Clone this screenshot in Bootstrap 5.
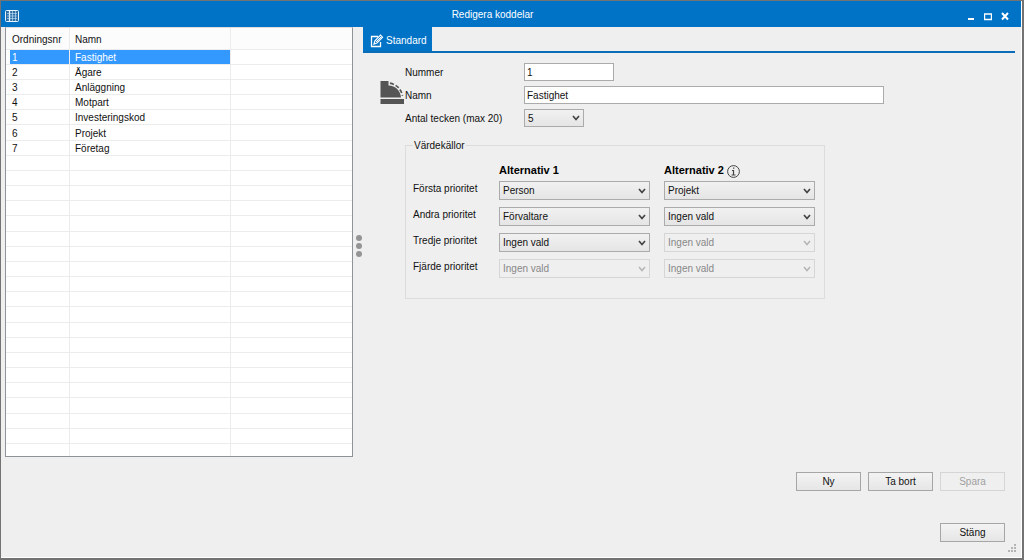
<!DOCTYPE html>
<html lang="sv">
<head>
<meta charset="utf-8">
<meta name="viewport" content="width=device-width, initial-scale=1">
<title>Redigera koddelar</title>
<link href="https://cdn.jsdelivr.net/npm/bootstrap@5.3.0/dist/css/bootstrap.min.css" rel="stylesheet">
<style>
  :root { --accent: #0173c7; --line: #ececec; }
  body { font: 10px/15px "Liberation Sans", Arial, sans-serif; color: #111; background: #efefef; }
  .window { border: 1px solid #737373; border-width: 1px 2px 2px 1px; }
  .window-inner { border: solid #fff; border-width: 0 1px 1px 0; }
  .titlebar { background: var(--accent); height: 26px; color: #fff; }
  .titlebar button { background: none; border: 0; padding: 0; line-height: 0; width: 17px; }
  .list-pane { width: 348px; height: 430px; background: #fff; border: 1px solid #8e9299; border-top-color: #ddd; overflow: hidden; }
  .code-list { width: 100%; table-layout: fixed; border-collapse: separate; border-spacing: 0; }
  .code-list th { height: 22px; font-weight: 400; background: #fcfcfc; }
  .code-list td { height: 15px; line-height: 12px; }
  .code-list tr:nth-child(6n) td { height: 16px; }
  .code-list th, .code-list td { padding: 2px 0 0 5px; border-bottom: 1px solid var(--line); border-right: 1px solid var(--line); white-space: nowrap; }
  .code-list th:last-child, .code-list td:last-child { border-right: 0; }
  .code-list th:first-child, .code-list td:first-child { padding-left: 6px; }
  .code-list .selected td:not(:last-child) { background: #3399ff; color: #fff; }
  .code-list .selected td:first-child { background: linear-gradient(90deg, #fff 4px, #3399ff 4px); }
  .splitter { width: 10px; padding: 208px 0 0 2px; gap: 2px; }
  .splitter i { width: 6px; height: 6px; border-radius: 50%; background: #949494; }
  .tabs { border-bottom: 2px solid #0b6cb8; margin-right: 6px; }
  .tabs .nav-link { background: var(--accent); color: #fff; height: 24px; padding: 3px 5px 0 7px; border-radius: 0; gap: 2px; }
  #standard { padding-top: 10px; }
  .form-icon { margin: 18px 0 0 16px; }
  .fields { display: grid; grid-template-columns: 119px 360px; row-gap: 5px; }
  .fields > * { align-self: center; }
  .form-control, .form-select { font-size: inherit; line-height: 15px; border-radius: 0; color: #111; border: 1px solid #ababab; padding: 0 2px; min-height: 0; }
  .form-select { height: 19px; padding: 0 14px 0 3px; background-color: #eaeaea;
    background-image: url("data:image/svg+xml,%3Csvg xmlns='http://www.w3.org/2000/svg' viewBox='0 0 8 6'%3E%3Cpath d='M1 1l3 3.5L7 1' fill='none' stroke='%23444' stroke-width='1.7'/%3E%3C/svg%3E"), linear-gradient(#f1f1f1, #e5e5e5);
    background-size: 8px 6px, 100% 100%; background-position: right 3px center, 0 0; }
  .fields .form-control, .fields .form-select { height: 18px; }
  .form-select:disabled { background-color: #efefef; color: #888; border-color: #d6d6d6;
    background-image: url("data:image/svg+xml,%3Csvg xmlns='http://www.w3.org/2000/svg' viewBox='0 0 8 6'%3E%3Cpath d='M1 1l3 3.5L7 1' fill='none' stroke='%23b5b5b5' stroke-width='1.5'/%3E%3C/svg%3E"); background-size: 8px 6px; background-position: right 3px center; }
  .sources { width: 420px; margin-top: 11px; }
  .sources fieldset { border: 1px solid #dcdcdc; padding: 0 9px 20px 7px; }
  .sources legend { float: none; font-size: inherit; line-height: 15px; width: auto; margin: 0; padding: 0 1px; }
  .priorities { display: grid; grid-template-columns: 72px 1fr 1fr; column-gap: 14px; row-gap: 7px; margin-top: 10px; white-space: nowrap; }
  .priorities .head { font-weight: 700; font-size: 11px; line-height: 15px; height: 11px; color: #000; }
  .btn-row { gap: 7px; }
  .btn-win { width: 65px; height: 19px; padding: 0; font-size: inherit; line-height: 17px; border: 1px solid #a6a6a6; border-radius: 0; color: #111; background: linear-gradient(#f3f3f3, #e6e6e6); }
  .btn-win:disabled { background: #efefef; color: #a0a0a0; border-color: #d5d5d5; opacity: 1; }
  .commands { padding: 15px 16px 15px 0; }
</style>
</head>
<body>
<div class="window min-vh-100 d-flex">
<div class="window-inner flex-fill d-flex flex-column">
  <header class="titlebar d-flex align-items-center">
    <svg class="ms-1 mt-1" width="14" height="12" viewBox="0 0 14 12"><rect x=".5" y=".5" width="13" height="11" rx="1" fill="#2a6ca3" stroke="#e7f6ff"/><path d="M4.500 1v10" stroke="#e7f6ff" stroke-width="1.300"/><path d="M7.500 1v10M10.500 1v10M2 3.500h10M2 6h10M2 8.500h10" stroke="#b9dcf5" stroke-width=".7"/></svg>
    <div class="flex-fill text-center ps-1">Redigera koddelar</div>
    <div class="d-flex pe-2 pt-1">
      <button type="button" aria-label="Minimera"><svg width="8" height="10"><path d="M1 8h6" stroke="#fff" stroke-width="2"/></svg></button>
      <button type="button" aria-label="Maximera"><svg width="8" height="10"><path d="M.5 3v5.500h7V3M0 3h8" fill="none" stroke="#fff" stroke-width="1.400"/></svg></button>
      <button type="button" aria-label="Stäng fönster"><svg width="8" height="10"><path d="M1 2l6 6.500M7 2L1 8.500" stroke="#fff" stroke-width="2"/></svg></button>
    </div>
  </header>
  <main class="d-flex ms-1">
    <section class="list-pane flex-shrink-0">
      <table class="code-list">
        <colgroup><col style="width:64px"><col style="width:161px"><col></colgroup>
        <thead><tr><th>Ordningsnr</th><th>Namn</th><th></th></tr></thead>
        <tbody id="codes">
          <tr class="selected"><td>1</td><td>Fastighet</td><td></td></tr>
          <tr><td>2</td><td>Ägare</td><td></td></tr>
          <tr><td>3</td><td>Anläggning</td><td></td></tr>
          <tr><td>4</td><td>Motpart</td><td></td></tr>
          <tr><td>5</td><td>Investeringskod</td><td></td></tr>
          <tr><td>6</td><td>Projekt</td><td></td></tr>
          <tr><td>7</td><td>Företag</td><td></td></tr>
        </tbody>
      </table>
    </section>
    <div class="splitter d-flex flex-column align-items-center flex-shrink-0"><i></i><i></i><i></i></div>
    <section class="flex-fill">
      <nav class="tabs nav">
        <a href="#standard" class="nav-link d-flex align-items-center">
          <svg width="14" height="14" viewBox="0 0 14 14" fill="none" stroke="#fff"><path d="M8 2.500H1.500v10h9V8" stroke-width="1.300"/><path d="M4 10l.8-3L10.500 1.200l2 2L7 9z" stroke-width="1.200"/><path d="M6 8l5-5" /></svg>
          Standard</a>
      </nav>
      <form id="standard" class="d-flex">
        <svg class="form-icon flex-shrink-0" width="26" height="24" viewBox="0 0 26 24" fill="#555"><path d="M1.500 0h8v4.500c7 0 12 5 12.500 12h-20.500z"/><path d="M1.500 18h23.500v5h-23.500z"/><path d="M11 2.200c7 1.500 11 6 12.500 12.500" fill="none" stroke="#555" stroke-width="1.700" stroke-dasharray="4 2"/></svg>
        <div>
          <div class="fields">
            <label for="nummer">Nummer</label><input class="form-control w-25" id="nummer" value="1">
            <label for="namn">Namn</label><input class="form-control" id="namn" value="Fastighet">
            <label for="antal">Antal tecken (max 20)</label><select class="form-select" id="antal" style="width:60px"><option>5</option></select>
          </div>
          <div class="sources">
            <fieldset>
              <legend>Värdekällor</legend>
              <div class="priorities">
                <span></span>
                <span class="head">Alternativ 1</span>
                <span class="head">Alternativ 2 <svg width="13" height="13" viewBox="0 0 13 13" fill="none" stroke="#444"><circle cx="6.500" cy="6.500" r="5.900"/><path d="M5 5.500h1.500v4M4.500 10h4M6 3.200h1.300" stroke-width="1.200"/></svg></span>
                <label for="p1">Första prioritet</label><select class="form-select" id="p1"><option>Person</option></select><select class="form-select" aria-label="Första prioritet, alternativ 2"><option>Projekt</option></select>
                <label for="p2">Andra prioritet</label><select class="form-select" id="p2"><option>Förvaltare</option></select><select class="form-select" aria-label="Andra prioritet, alternativ 2"><option>Ingen vald</option></select>
                <label for="p3">Tredje prioritet</label><select class="form-select" id="p3"><option>Ingen vald</option></select><select class="form-select" disabled aria-label="Tredje prioritet, alternativ 2"><option>Ingen vald</option></select>
                <label for="p4">Fjärde prioritet</label><select class="form-select" id="p4" disabled><option>Ingen vald</option></select><select class="form-select" disabled aria-label="Fjärde prioritet, alternativ 2"><option>Ingen vald</option></select>
              </div>
            </fieldset>
          </div>
        </div>
      </form>
    </section>
  </main>
  <footer class="commands flex-fill d-flex flex-column align-items-end justify-content-between">
    <div class="btn-row d-flex">
      <button type="button" class="btn btn-win">Ny</button>
      <button type="button" class="btn btn-win">Ta bort</button>
      <button type="button" class="btn btn-win" disabled>Spara</button>
    </div>
    <button type="button" class="btn btn-win">Stäng</button>
  </footer>
  <svg class="position-absolute bottom-0 end-0 me-2 mb-2" width="8" height="8" fill="#b4b4b4"><path d="M6 0h2v2H6zM3 3h2v2H3zM6 3h2v2H6zM0 6h2v2H0zM3 6h2v2H3zM6 6h2v2H6z"/></svg>
</div>
</div>
<script src="https://cdn.jsdelivr.net/npm/bootstrap@5.3.0/dist/js/bootstrap.bundle.min.js"></script>
<script>
  // The grid keeps drawing empty rows down to the bottom of the pane.
  const codes = document.getElementById('codes');
  while (codes.rows.length < 27) {
    const row = codes.insertRow();
    for (let i = 0; i < 3; i++) row.insertCell();
  }
</script>
</body>
</html>
